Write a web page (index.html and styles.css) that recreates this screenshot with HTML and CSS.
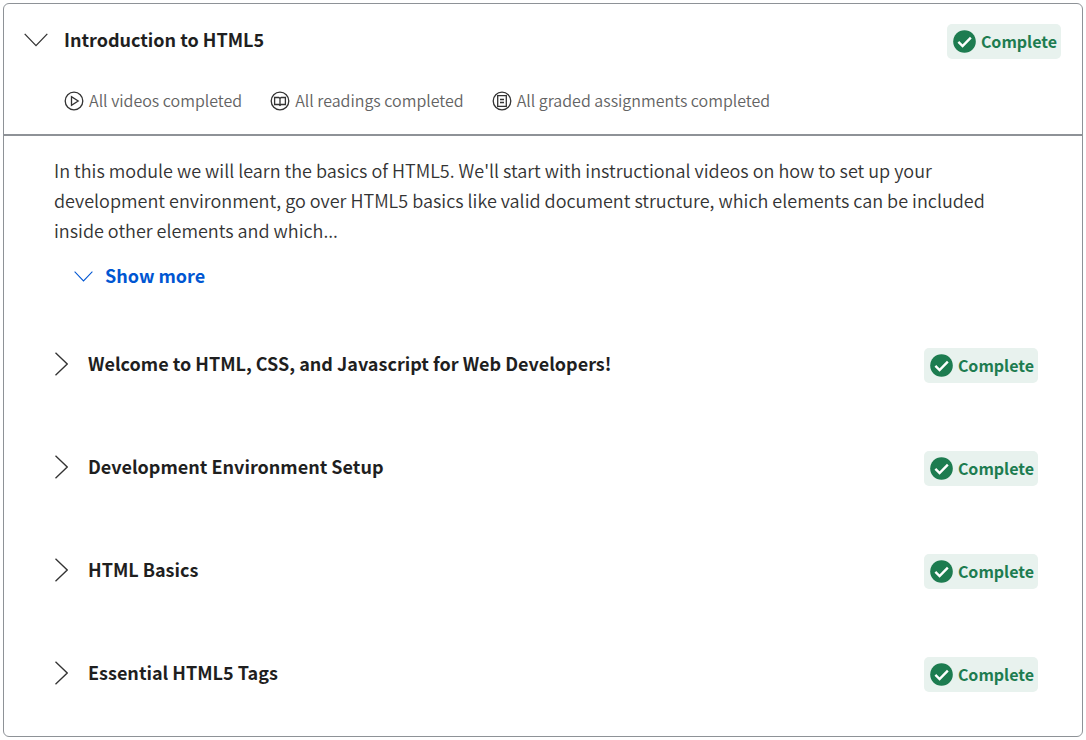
FILE: index.html
```html
<!DOCTYPE html>
<html lang="en">
<head>
<meta charset="utf-8">
<meta name="viewport" content="width=device-width, initial-scale=1">
<title>Introduction to HTML5</title>
<link rel="stylesheet" href="styles.css">
</head>
<body>
<svg class="sprite" aria-hidden="true">
  <symbol id="check" viewBox="0 0 24 24"><circle cx="12" cy="12" r="11.8" fill="#1d7c50"/><path d="M5.600 12.400l4.400 4.400L18.600 8" fill="none" stroke="#fff" stroke-width="2.500"/></symbol>
  <symbol id="right" viewBox="0 0 14 24"><path d="M1.500.7L13.200 12 1.500 23.300" fill="none" stroke="currentColor" stroke-width="1.3"/></symbol>
  <symbol id="down" viewBox="0 0 24 14"><path d="M.7.9L12 12.600 23.300.9" fill="none" stroke="currentColor" stroke-width="1.3"/></symbol>
</svg>
<main class="card">
  <header class="head">
    <button class="toggle head-toggle" type="button" aria-expanded="true">
      <svg class="chevron-down" aria-hidden="true"><use href="#down"/></svg>
      <span class="title">Introduction to HTML5</span>
    </button>
    <span class="badge"><svg class="check" aria-hidden="true"><use href="#check"/></svg>Complete</span>
    <ul class="stats">
      <li class="stat">
        <svg class="stat-icon" viewBox="0 0 20 20" aria-hidden="true"><circle cx="10" cy="10" r="8.8"/><path d="M7.500 5.600v8.800l6.700-4.400z"/></svg>
        All videos completed
      </li>
      <li class="stat">
        <svg class="stat-icon" viewBox="0 0 20 20" aria-hidden="true"><circle cx="10" cy="10" r="8.8"/><path d="M10 7.500L8.800 6.500H4.600v7h4.200L10 14.500l1.200-1h4.200v-7h-4.200zv7"/></svg>
        All readings completed
      </li>
      <li class="stat">
        <svg class="stat-icon" viewBox="0 0 20 20" aria-hidden="true"><circle cx="10" cy="10" r="8.8"/><path d="M5.700 4.700h8.600v10.600H5.700z"/><path d="M8 8.500h4M8 11.500h4"/></svg>
        All graded assignments completed
      </li>
    </ul>
  </header>
  <section class="content">
    <p class="description">In this module we will learn the basics of HTML5. We'll start with instructional videos on how to set up your development environment, go over HTML5 basics like valid document structure, which elements can be included inside other elements and which...</p>
    <button class="toggle more" type="button"><svg class="chevron-small" aria-hidden="true"><use href="#down"/></svg>Show more</button>
    <ul class="lessons">
      <li class="lesson"><button class="toggle" type="button" aria-expanded="false"><svg class="chevron-right" aria-hidden="true"><use href="#right"/></svg><span class="title">Welcome to HTML, CSS, and Javascript for Web Developers!</span></button><span class="badge"><svg class="check" aria-hidden="true"><use href="#check"/></svg>Complete</span></li>
      <li class="lesson"><button class="toggle" type="button" aria-expanded="false"><svg class="chevron-right" aria-hidden="true"><use href="#right"/></svg><span class="title">Development Environment Setup</span></button><span class="badge"><svg class="check" aria-hidden="true"><use href="#check"/></svg>Complete</span></li>
      <li class="lesson"><button class="toggle" type="button" aria-expanded="false"><svg class="chevron-right" aria-hidden="true"><use href="#right"/></svg><span class="title">HTML Basics</span></button><span class="badge"><svg class="check" aria-hidden="true"><use href="#check"/></svg>Complete</span></li>
      <li class="lesson"><button class="toggle" type="button" aria-expanded="false"><svg class="chevron-right" aria-hidden="true"><use href="#right"/></svg><span class="title">Essential HTML5 Tags</span></button><span class="badge"><svg class="check" aria-hidden="true"><use href="#check"/></svg>Complete</span></li>
    </ul>
  </section>
</main>
</body>
</html>
```
FILE: styles.css
```css
* { box-sizing: border-box; }

body {
  margin: 3px;
  background: #fff;
  color: #1f1f1f;
  font-family: "Noto Sans CJK SC", "Noto Sans", sans-serif;
  font-size: 18px;
  font-weight: 350;
  line-height: 30px;
}

.sprite { display: none; }

.card {
  border: 1px solid #8e9297;
  border-radius: 6px;
}

.head {
  display: grid;
  grid-template-columns: 1fr auto;
  align-items: start;
  row-gap: 25px;
  padding: 20px 21px 18px 20px;
  border-bottom: 2px solid #8e9297;
}

.toggle {
  display: flex;
  align-items: center;
  gap: 20px;
  margin: 0;
  padding: 0;
  border: 0;
  background: none;
  color: #1f1f1f;
  font: inherit;
  font-weight: 700;
  text-align: left;
  cursor: pointer;
}

.toggle svg { margin-top: 2px; }

.head-toggle { gap: 16px; }

.chevron-down { width: 24px; height: 14px; color: #333; }
.chevron-right { width: 14px; height: 24px; color: #333; }
.chevron-small { width: 19px; height: 11px; }

.badge {
  display: flex;
  flex: none;
  align-items: center;
  gap: 5px;
  height: 35px;
  padding: 0 4px 2px 6px;
  border-radius: 5px;
  background: #e8f2ee;
  color: #1d7c50;
  font-size: 16px;
  font-weight: 700;
}

.check {
  width: 23px;
  height: 23px;
  margin-top: 2px;
}

.stats {
  display: flex;
  flex-wrap: wrap;
  grid-column: 1 / -1;
  gap: 28px;
  margin: 0;
  padding: 0 0 0 40px;
  list-style: none;
  color: #636363;
  font-size: 16px;
  line-height: 32px;
}

.stat {
  display: flex;
  align-items: center;
  gap: 5px;
}

.stat-icon {
  width: 20px;
  height: 20px;
  margin-top: 2px;
  fill: none;
  stroke: #333;
  stroke-width: 1.3;
}

.content { padding: 19px 44px 44px 50px; }

.description {
  margin: 0;
  padding-right: 26px;
  color: #333;
}

.more {
  gap: 12px;
  margin: 15px 0 0 20px;
  color: #0056d2;
}

.lessons {
  display: grid;
  gap: 68px;
  margin: 58px 0 0;
  padding: 0;
  list-style: none;
}

.lesson {
  display: flex;
  align-items: flex-start;
  justify-content: space-between;
  gap: 20px;
}
```
